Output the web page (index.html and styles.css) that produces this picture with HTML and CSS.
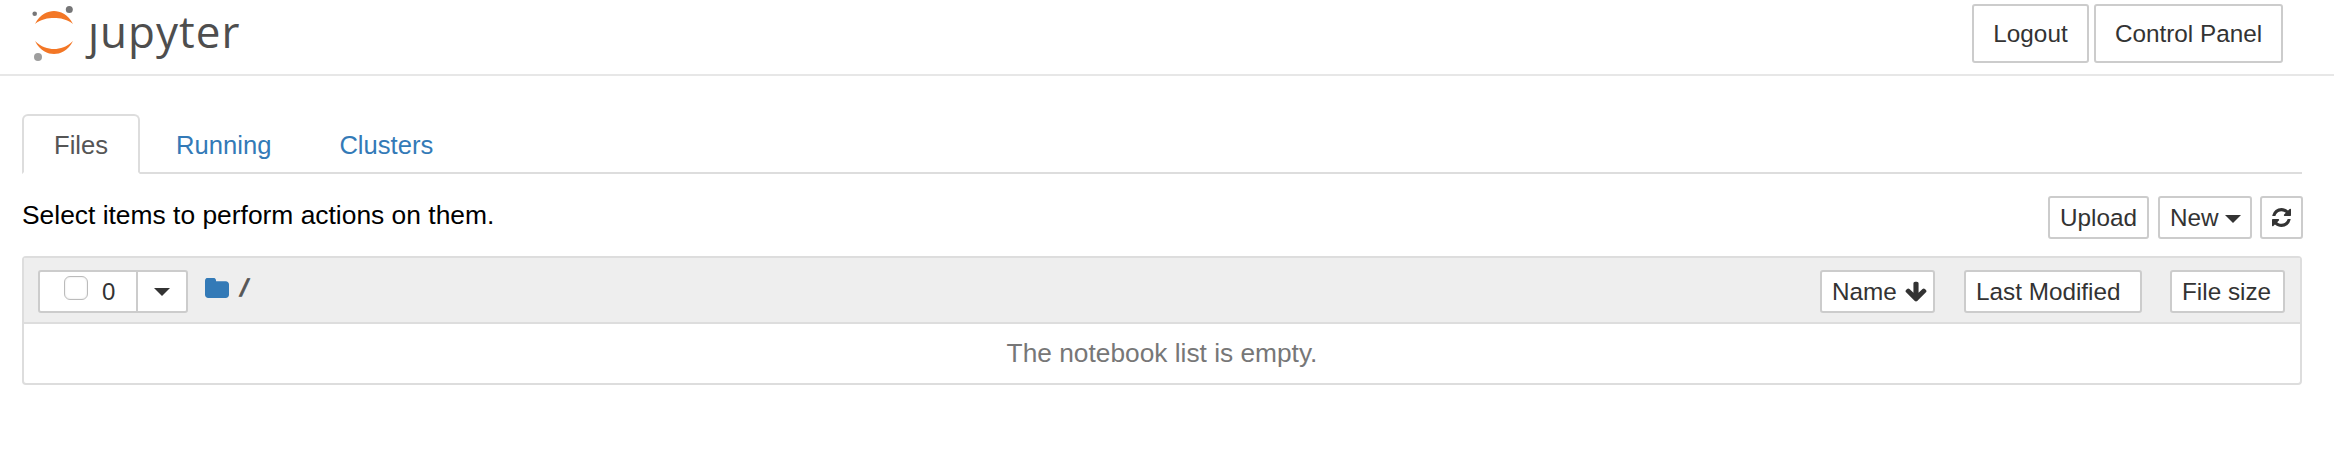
FILE: index.html
```html
<!DOCTYPE html>
<html lang="en">
<head>
  <meta charset="UTF-8" />
  <title>Home</title>
  <link rel="stylesheet" href="styles.css">
</head>
<body>
  <div class="header">
    <div class="logo">
      <svg class="logo-mark" viewBox="0 0 46 56" width="46" height="56">
        <path fill="#f37726" d="M3 18 C8 8 16 5 22 5 C28 5 36 8 41 18 C35 13 28 12 22 12 C16 12 9 13 3 18 Z"/>
        <path fill="#f37726" d="M3 35 C9 41 16 43 22 43 C28 43 35 41 41 35 C36 45 28 48 22 48 C16 48 8 45 3 35 Z"/>
        <circle fill="#767677" cx="2.7" cy="7.7" r="2.3"/>
        <circle fill="#767677" cx="37.3" cy="3.6" r="3.5"/>
        <circle fill="#9e9e9e" cx="6" cy="51" r="4"/>
      </svg>
      <span class="logo-text">ȷupyter</span>
    </div>
    <div class="header-buttons">
      <button class="btn btn-header btn-logout">Logout</button>
      <button class="btn btn-header btn-panel">Control Panel</button>
    </div>
  </div>

  <div class="main">
    <div class="tabs">
      <div class="tab active">Files</div>
      <div class="tab">Running</div>
      <div class="tab">Clusters</div>
    </div>

    <div class="toolbar">
      <div class="hint">Select items to perform actions on them.</div>
      <div class="toolbar-buttons">
        <button class="btn btn-small btn-upload">Upload</button>
        <button class="btn btn-small btn-new">New <span class="caret"></span></button>
        <button class="btn btn-small btn-refresh">
          <svg viewBox="0 0 1536 1536" width="23" height="23"><path fill="#333" d="M1511 928q0 5-1 7-64 268-268 434.5t-478 166.5q-146 0-282.5-55t-243.5-157l-129 129q-19 19-45 19t-45-19-19-45v-448q0-26 19-45t45-19h448q26 0 45 19t19 45-19 45l-137 137q71 66 161 102t187 36q134 0 250-65t186-179q11-17 53-117 8-23 30-23h192q13 0 22.5 9.5t9.5 22.5zm25-800v448q0 26-19 45t-45 19h-448q-26 0-45-19t-19-45 19-45l138-138q-148-137-349-137-134 0-250 65t-186 179q-11 17-53 117-8 23-30 23h-199q-13 0-22.5-9.5t-9.5-22.5v-7q65-268 270-434.5t480-166.5q146 0 284 55.5t245 156.5l130-129q19-19 45-19t45 19 19 45z"/></svg>
        </button>
      </div>
    </div>

    <div class="list">
      <div class="list-header">
        <div class="select-group">
          <div class="select-main">
            <input class="select-check" type="checkbox">
            <span class="select-count">0</span>
          </div>
          <div class="select-drop"><span class="caret"></span></div>
        </div>
        <svg class="folder" viewBox="64 160 1664 1376" width="24" height="20"><path fill="#337ab7" d="M1728 608v704q0 92-66 158t-158 66h-1216q-92 0-158-66t-66-158v-960q0-92 66-158t158-66h320q92 0 158 66t66 158v32h672q92 0 158 66t66 158z"/></svg>
        <span class="crumb">/</span>
        <div class="sort-buttons">
          <button class="btn btn-sort btn-name">Name <svg viewBox="0 0 1792 1792" width="24" height="24"><path fill="#333" d="M1675 832q0 53-37 90l-651 652q-39 37-91 37-53 0-90-37l-651-652q-38-36-38-90 0-53 38-91l74-75q39-37 91-37 53 0 90 37l294 294v-704q0-52 38-90t90-38h128q52 0 90 38t38 90v704l294-294q37-37 90-37 52 0 91 37l75 75q37 39 37 91z"/></svg></button>
          <button class="btn btn-sort btn-modified">Last Modified</button>
          <button class="btn btn-sort btn-size">File size</button>
        </div>
      </div>
      <div class="list-empty">The notebook list is empty.</div>
    </div>
  </div>
</body>
</html>
```

FILE: styles.css
```css
body {
  margin: 0;
  background: #fff;
  color: #000;
  font-family: "Liberation Sans", Arial, sans-serif;
  font-size: 26px;
}
.header {
  display: flex;
  justify-content: space-between;
  height: 70px;
  padding: 4px 51px 0 32px;
  border-bottom: 2px solid #e7e7e7;
}
.logo {
  display: flex;
  align-items: flex-start;
}
.logo-mark {
  margin-top: 2px;
}
.logo-text {
  margin-left: 10px;
  font-family: "Open Sans", sans-serif;
  font-size: 44px;
  line-height: 54px;
  color: #4e4e4e;
  letter-spacing: 1px;
}
.header-buttons {
  display: flex;
  gap: 5px;
  align-items: flex-start;
}
.btn {
  box-sizing: border-box;
  background: #fff;
  color: #333;
  border: 2px solid #ccc;
  border-radius: 3px;
  font-family: inherit;
  font-size: 24.3px;
  padding: 0;
  white-space: nowrap;
}
.btn-header {
  height: 59px;
}
.btn-logout {
  width: 117px;
}
.btn-panel {
  width: 189px;
}
.main {
  padding: 0 32px 0 22px;
}
.tabs {
  display: flex;
  margin-top: 38px;
  height: 58px;
  border-bottom: 2px solid #ddd;
}
.tab {
  box-sizing: border-box;
  height: 60px;
  line-height: 58px;
  padding: 0 30px;
  margin-right: 4px;
  border: 2px solid transparent;
  border-radius: 6px 6px 0 0;
  font-size: 25.6px;
  color: #337ab7;
}
.tab.active {
  color: #555;
  background: #fff;
  border-color: #ddd #ddd #fff;
}
.toolbar {
  display: flex;
  justify-content: space-between;
  height: 82px;
}
.hint {
  margin-top: 26px;
  font-size: 26.4px;
  line-height: 30px;
}
.toolbar-buttons {
  display: flex;
  gap: 8px;
  padding-top: 22px;
  margin-right: -1px;
}
.btn-small {
  height: 43px;
  padding: 0 10px;
}
.btn-upload {
  width: 101px;
  margin-right: 1px;
}
.btn-new {
  width: 94px;
}
.btn-refresh {
  width: 43px;
  display: flex;
  align-items: center;
  justify-content: center;
}
.caret {
  display: inline-block;
  width: 0;
  height: 0;
  vertical-align: middle;
  border-top: 8px solid #333;
  border-left: 8px solid transparent;
  border-right: 8px solid transparent;
}
.list {
  border: 2px solid #ddd;
  border-radius: 4px;
}
.list-header {
  display: flex;
  align-items: flex-start;
  height: 52px;
  padding: 12px 15px 0 14px;
  background: #eee;
  border-bottom: 2px solid #ddd;
}
.select-group {
  box-sizing: border-box;
  display: flex;
  width: 150px;
  height: 43px;
  background: #fff;
  border: 2px solid #ccc;
  border-radius: 3px;
}
.select-main {
  display: flex;
  align-items: center;
  width: 96px;
  border-right: 2px solid #ccc;
}
.select-check {
  appearance: none;
  box-sizing: border-box;
  width: 24px;
  height: 24px;
  margin: -7px 0 0 24px;
  background: #fff;
  border: 1px solid #bbb;
  border-radius: 6px;
  box-shadow: inset 0 0 2px #ddd;
}
.select-count {
  margin-left: 14px;
  font-size: 24px;
  color: #333;
}
.select-drop {
  flex: 1;
  display: flex;
  align-items: center;
  justify-content: center;
}
.folder {
  margin: 8px 0 0 17px;
}
.crumb {
  margin: 2px 0 0 12px;
  color: #555;
  font-size: 24px;
  line-height: 32px;
  -webkit-text-stroke: 0.8px #555;
  transform: skewX(-8deg) scaleX(1.2);
}
.sort-buttons {
  display: flex;
  gap: 28px;
  margin-left: auto;
}
.btn-sort {
  height: 43px;
  padding: 0 10px;
  text-align: left;
}
.btn-name {
  width: 115px;
  margin-right: 1px;
}
.btn-name svg {
  vertical-align: -4px;
}
.btn-modified {
  width: 178px;
}
.btn-size {
  width: 115px;
}
.list-empty {
  height: 59px;
  font-size: 26.3px;
  line-height: 58px;
  text-align: center;
  color: #777;
}
```
